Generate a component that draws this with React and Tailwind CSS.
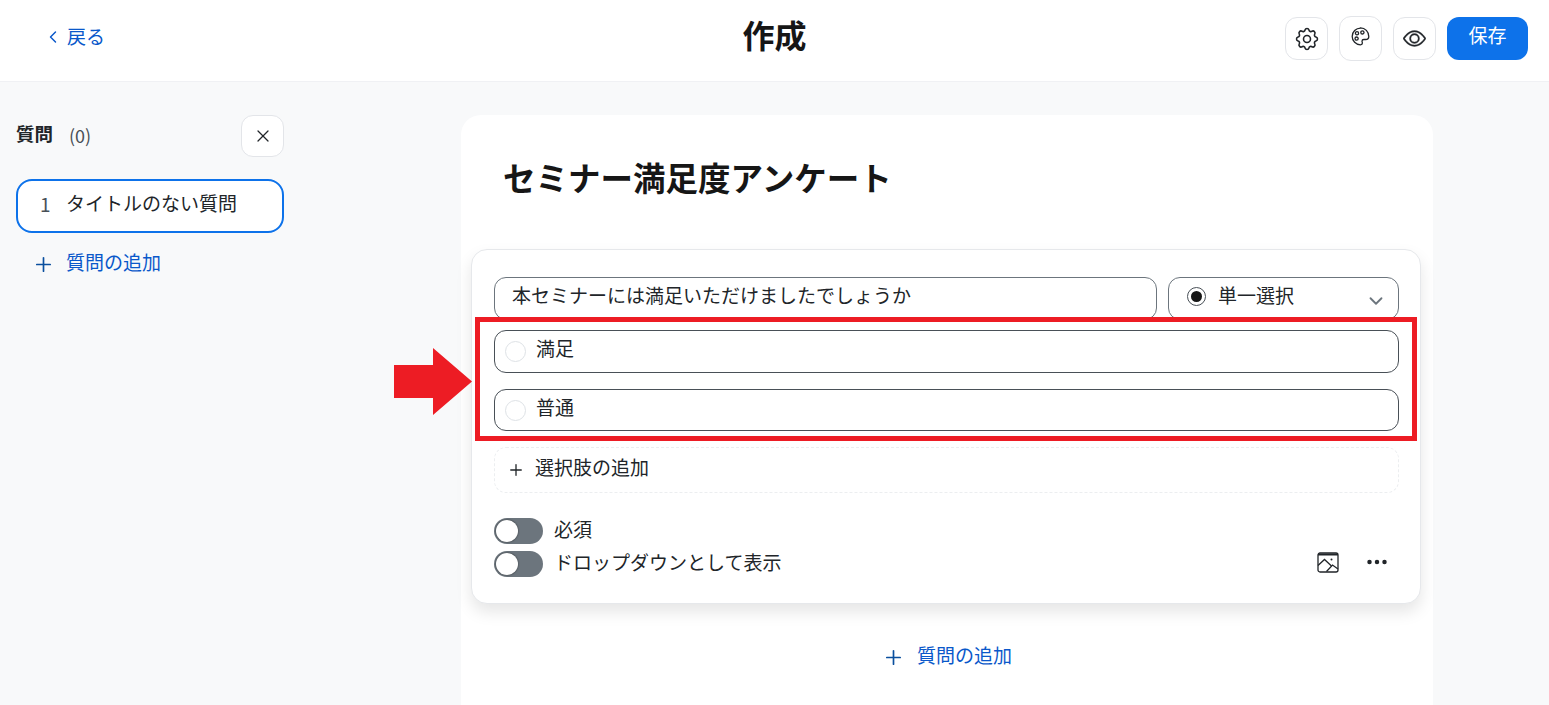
import { ChevronLeft, ChevronDown, Plus, X } from 'lucide-react';
import { BsEye, BsThreeDots } from 'react-icons/bs';
import { TbSettings } from 'react-icons/tb';

const font = 'font-["Noto_Sans_CJK_JP","Noto_Sans",sans-serif]';

function IconButton({ children, className = '' }) {
  return (
    <button className={`flex size-[43px] items-center justify-center rounded-xl border border-[#e3e5e9] bg-white text-[#212529] ${className}`}>
      {children}
    </button>
  );
}

function PaletteIcon() {
  return (
    <svg width="19" height="19" viewBox="0 0 19 19" fill="none" stroke="#212529" strokeWidth="1.3">
      <path d="M9.500 1.200C4.900 1.200 1.200 4.800 1.200 9.400c0 4.600 3.700 8.400 8.300 8.400 1.200 0 1.900-.7 1.900-1.700 0-.7-.4-1.200-.4-1.900 0-1 .8-1.700 1.900-1.700h1.700c2 0 3.200-1.200 3.200-3.100 0-4.600-3.700-8.600-8.300-8.600z" />
      <circle cx="6" cy="6.200" r="1.600" />
      <circle cx="11.400" cy="5.400" r="1.600" />
      <circle cx="5.600" cy="11.600" r="1.600" />
    </svg>
  );
}

function ImageIcon() {
  return (
    <svg width="22" height="21" viewBox="0 0 22 21" fill="none" stroke="#212529" strokeWidth="1.3">
      <rect x="1" y="1" width="20" height="19" rx="2" />
      <path d="M1 2.500h20" strokeWidth="2" />
      <path d="M1 13.500l6.500-6 7 6.500" />
      <path d="M9.500 19.500l6-6.500 5.500 4" />
      <circle cx="14.500" cy="7.500" r="1" fill="#212529" stroke="none" />
    </svg>
  );
}

function Toggle() {
  return (
    <span className="flex h-[26px] w-[49px] shrink-0 items-center rounded-full bg-[#6c757d] pl-[2px]">
      <span className="size-[22px] rounded-full bg-white shadow-[0_0_2px_rgba(0,0,0,0.6)]" />
    </span>
  );
}

function Option({ label, className = 'h-[43px]' }) {
  return (
    <div className={`flex items-center rounded-xl border border-[#495057] bg-white pl-[10px] ${className}`}>
      <span className="size-[21px] rounded-full border border-[#dee2e6]" />
      <span className="ml-[10px] -mt-[6px] text-[19px] text-[#212529]">{label}</span>
    </div>
  );
}

export default function App() {
  return (
    <div className={`${font} flex h-[705px] flex-col overflow-hidden bg-[#f8f9fa] text-[#212529]`}>
      {/* header */}
      <header className="relative flex h-[82px] shrink-0 items-start justify-between border-b border-[#f0f1f4] bg-white pr-[21px]">
        <a className="mt-[22px] ml-[43px] flex items-center gap-[4px] text-[19px] leading-[28px] text-[#0a58ca]">
          <ChevronLeft size={20} strokeWidth={1.75} className="mt-[2px]" />
          戻る
        </a>
        <h1 className="absolute left-0 right-0 top-[11px] text-center text-[32px] font-bold leading-[46px] text-[#161616]">作成</h1>
        <div className="mt-[17px] flex items-start gap-[11px]">
          <IconButton><TbSettings size={28} strokeWidth={1.35} /></IconButton>
          <IconButton className="-mt-px h-[45px] pb-[5px]"><PaletteIcon /></IconButton>
          <IconButton><BsEye size={23} stroke="currentColor" strokeWidth={0.25} /></IconButton>
          <button className="h-[43px] w-[81px] rounded-xl bg-[#0d72ea] pb-[7px] text-[19px] text-white">保存</button>
        </div>
      </header>

      <div className="flex min-h-0 flex-1 items-start">
        {/* sidebar */}
        <aside className="ml-4 mt-[33px] w-[268px] shrink-0">
          <div className="flex h-[42px] items-center">
            <span className="pb-[4px] text-[18.500px] font-bold">質問</span>
            <span className="ml-4 pb-[3px] text-lg text-[#495057]">(0)</span>
            <button className="ml-auto flex h-[42px] w-[43px] items-center justify-center rounded-xl border border-[#e3e5e9] bg-white">
              <X size={20} strokeWidth={1.5} />
            </button>
          </div>
          <div className="mt-[22px] flex h-[54px] items-center rounded-2xl border-2 border-[#0d72ea] bg-white pl-[22px] pb-[6px] text-[19px]">
            <span className="w-[26px] pt-[2px] text-[#495057]">1</span>
            <span>タイトルのない質問</span>
          </div>
          <a className="mt-[14px] ml-[19px] flex h-[32px] items-center gap-[11px] pb-[2px] text-[19px] text-[#0a58ca]">
            <Plus size={23} strokeWidth={1.75} className="mt-[5px] -ml-[3px] shrink-0 text-[#0a4f9e]" />
            質問の追加
          </a>
        </aside>

        {/* form */}
        <main className="ml-[177px] mt-[33px] h-[640px] w-[972px] shrink-0 rounded-[20px] bg-white px-[10px]">
          <h2 className="ml-[32px] mt-[37px] text-[32.500px] font-bold leading-[50px] text-[#161616]">セミナー満足度アンケート</h2>

          <section className="relative mt-[47px] h-[355px] w-[950px] rounded-2xl border border-[#e6e8eb] bg-white pl-[22px] pr-[21px] pt-[27px] shadow-[0_8px_16px_rgba(0,0,0,0.1)]">
            <div className="flex gap-[11px]">
              <div className="flex h-[43px] flex-1 items-center rounded-xl border border-[#6c757d] pl-[17px] pb-[7px] text-[19px]">
                本セミナーには満足いただけましたでしょうか
              </div>
              <div className="relative flex h-[43px] w-[231px] items-center rounded-xl border border-[#6c757d] pl-[18px] pb-[7px] text-[19px]">
                <span className="mr-[12px] mt-[2px] flex size-[19px] items-center justify-center rounded-full border border-[#495057]">
                  <span className="size-[11px] rounded-full bg-[#161616]" />
                </span>
                単一選択
                <ChevronDown size={22} strokeWidth={2} className="absolute right-[11px] top-[12px] text-[#6c757d]" />
              </div>
            </div>

            <div className="mt-[10px] flex flex-col gap-4">
              <Option label="満足" />
              <Option label="普通" className="h-[42px]" />
            </div>

            <div className="mt-[16px] flex h-[46px] items-center rounded-xl border border-dashed border-[#eceef0] pl-[12px] pb-[6px] text-[19px]">
              <Plus size={18} strokeWidth={1.75} className="mr-[10px] mt-[6px]" />
              選択肢の追加
            </div>

            <div className="mt-[25px] flex h-[26px] items-center gap-[11px] text-[19px]">
              <Toggle />
              <span className="pb-[4px] leading-[26px]">必須</span>
            </div>
            <div className="mt-[7px] flex h-[26px] items-center gap-[11px] text-[19px]">
              <Toggle />
              <span className="pb-[4px] leading-[26px]">ドロップダウンとして表示</span>
              <span className="ml-auto mr-[10px] flex items-center gap-[26px] pb-[4px]">
                <ImageIcon />
                <BsThreeDots size={24} />
              </span>
            </div>

            {/* red annotation over the options */}
            <div className="absolute left-[3px] top-[67px] h-[124px] w-[942px] border-[5px] border-[#ed1c24]" />
            <svg className="absolute -left-[78px] top-[98px]" width="79" height="67" viewBox="0 0 79 67">
              <path d="M0 17h39V0l39 33.500-39 33.500V50H0z" fill="#ed1c24" />
            </svg>
          </section>

          <a className="mt-[34px] flex h-[36px] items-center justify-center gap-[12px] pb-[2px] text-[19px] text-[#0a58ca]">
            <Plus size={23} strokeWidth={1.75} className="mt-[5px] text-[#0a4f9e]" />
            質問の追加
          </a>
        </main>
      </div>
    </div>
  );
}
